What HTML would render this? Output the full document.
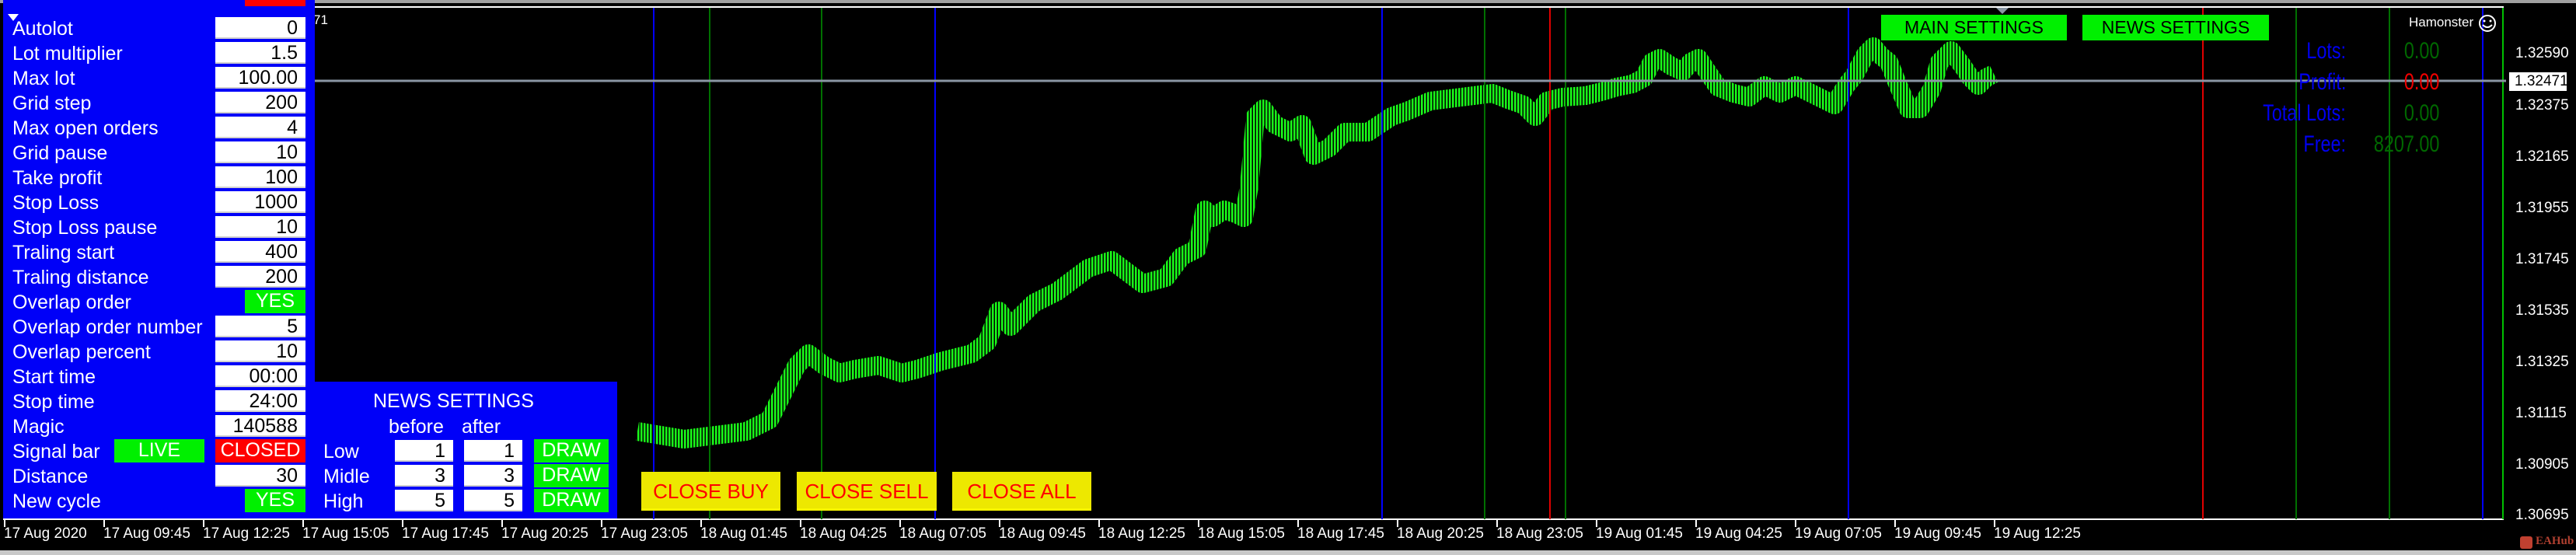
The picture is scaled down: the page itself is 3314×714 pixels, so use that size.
<!DOCTYPE html>
<html><head><meta charset="utf-8">
<style>
*{margin:0;padding:0;box-sizing:border-box}
body{width:3314px;height:714px;background:#000;position:relative;overflow:hidden;font-family:"Liberation Sans",sans-serif}
.a{position:absolute;white-space:nowrap}
.lbl{position:absolute;left:16px;color:#fff;font-size:25px;line-height:32px}
.box{position:absolute;background:#fff;color:#000;font-size:25px;text-align:right;padding-right:10px;line-height:28px;height:28px;border-bottom:2px solid #d0d0d0}
.g{position:absolute;background:#00f000;color:#fff;font-size:25px;text-align:center;line-height:28px;height:30px}
.t{position:absolute;top:676px;color:#fff;font-size:19px}
.p{position:absolute;left:3236px;color:#fff;font-size:19px}
.yb{position:absolute;top:607px;height:50px;background:#ede800;color:#f00;font-size:26px;text-align:center;line-height:50px;border-bottom:3px solid #f8f400}
.s{position:absolute;font-size:30px;transform:scaleX(0.78);transform-origin:right center}
</style></head><body>
<div class="a" style="left:0;top:0;width:3314px;height:4px;background:#a0a0a0"></div>
<div class="a" style="left:0;top:708px;width:3314px;height:6px;background:#c8c8c8"></div>
<div class="a" style="left:4px;top:8px;width:3217px;height:661px;border:2px solid #fff"></div>
<svg class="a" style="left:0;top:0" width="3314" height="714">
<defs>
<pattern id="st" width="4" height="10" patternUnits="userSpaceOnUse"><rect x="0" y="0" width="2.5" height="10" fill="#1aff1a"/></pattern>
<mask id="m"><polyline fill="none" stroke="#fff" stroke-width="24" stroke-linejoin="round" points="820,555 850,560 880,565 920,560 960,555 990,540 1010,500 1025,470 1040,455 1060,470 1080,480 1100,475 1130,470 1160,480 1180,475 1210,465 1250,455 1270,440 1285,400 1300,420 1330,390 1360,375 1400,345 1430,335 1470,365 1500,357 1520,330 1540,320 1550,270 1560,280 1575,270 1590,275 1600,280 1607,240 1615,150 1625,140 1640,160 1660,170 1675,160 1690,200 1710,190 1730,170 1760,170 1790,150 1810,143 1840,130 1880,125 1920,120 1940,128 1960,135 1975,150 1990,130 2010,125 2040,123 2060,118 2080,112 2100,108 2115,100 2125,80 2135,75 2150,85 2165,92 2175,80 2185,75 2195,90 2210,112 2230,120 2250,125 2270,110 2290,120 2310,110 2320,115 2340,125 2360,135 2375,110 2385,98 2400,70 2410,60 2420,72 2430,80 2440,105 2455,140 2470,140 2485,115 2495,80 2510,65 2525,85 2535,100 2545,110 2555,100 2565,95"/></mask>
</defs>
<rect x="800" y="0" width="1800" height="660" fill="url(#st)" mask="url(#m)"/>
<g stroke-width="2">
<line x1="841" y1="10" x2="841" y2="668" stroke="#0000ff"/>
<line x1="913" y1="10" x2="913" y2="668" stroke="#007000"/>
<line x1="1057" y1="10" x2="1057" y2="668" stroke="#007000"/>
<line x1="1203" y1="10" x2="1203" y2="668" stroke="#0000ff"/>
<line x1="1778" y1="10" x2="1778" y2="668" stroke="#0000ff"/>
<line x1="1910" y1="10" x2="1910" y2="668" stroke="#007000"/>
<line x1="1994" y1="10" x2="1994" y2="668" stroke="#e00000"/>
<line x1="2014" y1="10" x2="2014" y2="668" stroke="#007000"/>
<line x1="2378" y1="10" x2="2378" y2="668" stroke="#0000ff"/>
<line x1="2834" y1="10" x2="2834" y2="668" stroke="#e00000"/>
<line x1="2954" y1="10" x2="2954" y2="668" stroke="#007000"/>
<line x1="3074" y1="10" x2="3074" y2="668" stroke="#007000"/>
<line x1="3194" y1="10" x2="3194" y2="668" stroke="#0000ff"/>
<line x1="3220" y1="10" x2="3220" y2="668" stroke="#00c000"/>
</g>
<line x1="400" y1="104" x2="3224" y2="104" stroke="#8a96a4" stroke-width="3"/>
<g stroke="#fff" stroke-width="2">
<line x1="6" y1="669" x2="6" y2="678"/><line x1="134" y1="669" x2="134" y2="678"/><line x1="262" y1="669" x2="262" y2="678"/><line x1="390" y1="669" x2="390" y2="678"/><line x1="518" y1="669" x2="518" y2="678"/><line x1="646" y1="669" x2="646" y2="678"/><line x1="774" y1="669" x2="774" y2="678"/><line x1="902" y1="669" x2="902" y2="678"/><line x1="1030" y1="669" x2="1030" y2="678"/><line x1="1158" y1="669" x2="1158" y2="678"/><line x1="1286" y1="669" x2="1286" y2="678"/><line x1="1414" y1="669" x2="1414" y2="678"/><line x1="1542" y1="669" x2="1542" y2="678"/><line x1="1670" y1="669" x2="1670" y2="678"/><line x1="1798" y1="669" x2="1798" y2="678"/><line x1="1926" y1="669" x2="1926" y2="678"/><line x1="2054" y1="669" x2="2054" y2="678"/><line x1="2182" y1="669" x2="2182" y2="678"/><line x1="2310" y1="669" x2="2310" y2="678"/><line x1="2438" y1="669" x2="2438" y2="678"/><line x1="2566" y1="669" x2="2566" y2="678"/>
</g>
<polygon points="2568,10 2584,10 2576,18" fill="#8a96a4"/>
<circle cx="3200" cy="30" r="10" fill="none" stroke="#fff" stroke-width="2"/>
<circle cx="3196" cy="27" r="1.5" fill="#fff"/><circle cx="3204" cy="27" r="1.5" fill="#fff"/>
<path d="M3194 32 Q3200 38 3206 32" fill="none" stroke="#fff" stroke-width="2"/>
</svg>
<div class="t" style="left:5px">17 Aug 2020</div><div class="t" style="left:133px">17 Aug 09:45</div><div class="t" style="left:261px">17 Aug 12:25</div><div class="t" style="left:389px">17 Aug 15:05</div><div class="t" style="left:517px">17 Aug 17:45</div><div class="t" style="left:645px">17 Aug 20:25</div><div class="t" style="left:773px">17 Aug 23:05</div><div class="t" style="left:901px">18 Aug 01:45</div><div class="t" style="left:1029px">18 Aug 04:25</div><div class="t" style="left:1157px">18 Aug 07:05</div><div class="t" style="left:1285px">18 Aug 09:45</div><div class="t" style="left:1413px">18 Aug 12:25</div><div class="t" style="left:1541px">18 Aug 15:05</div><div class="t" style="left:1669px">18 Aug 17:45</div><div class="t" style="left:1797px">18 Aug 20:25</div><div class="t" style="left:1925px">18 Aug 23:05</div><div class="t" style="left:2053px">19 Aug 01:45</div><div class="t" style="left:2181px">19 Aug 04:25</div><div class="t" style="left:2309px">19 Aug 07:05</div><div class="t" style="left:2437px">19 Aug 09:45</div><div class="t" style="left:2565px">19 Aug 12:25</div>
<div class="p" style="top:58px">1.32590</div>
<div class="a" style="left:3228px;top:93px;width:74px;height:24px;background:#fff;color:#000;font-size:19px;padding-left:7px;line-height:24px">1.32471</div>
<div class="p" style="top:125px">1.32375</div><div class="p" style="top:191px">1.32165</div><div class="p" style="top:257px">1.31955</div><div class="p" style="top:323px">1.31745</div><div class="p" style="top:389px">1.31535</div><div class="p" style="top:455px">1.31325</div><div class="p" style="top:521px">1.31115</div><div class="p" style="top:587px">1.30905</div><div class="p" style="top:652px">1.30695</div>
<div class="a" style="left:3242px;top:690px;width:16px;height:16px;border-radius:3px;background:#c04030"></div>
<div class="a" style="left:3262px;top:688px;color:#b04030;font-size:15px;font-family:'Liberation Serif',serif;font-weight:bold">EAHub</div>
<div class="a" style="left:403px;top:16px;color:#fff;font-size:17px">71</div>
<div class="a" style="left:4px;top:0;width:401px;height:667px;background:#0000f8"></div>
<div class="a" style="left:405px;top:491px;width:389px;height:176px;background:#0000f8"></div>
<div class="a" style="left:315px;top:0;width:78px;height:8px;background:#f00"></div>
<div class="lbl" style="top:-25px">Autolot</div>
<svg class="a" style="left:10px;top:18px" width="14" height="10"><polygon points="0,0 14,0 7,9" fill="#fff"/></svg>
<div class="lbl" style="top:21px">Autolot</div><div class="box" style="left:277px;top:22px;width:116px">0</div>
<div class="lbl" style="top:53px">Lot multiplier</div><div class="box" style="left:277px;top:54px;width:116px">1.5</div>
<div class="lbl" style="top:85px">Max lot</div><div class="box" style="left:277px;top:86px;width:116px">100.00</div>
<div class="lbl" style="top:117px">Grid step</div><div class="box" style="left:277px;top:118px;width:116px">200</div>
<div class="lbl" style="top:149px">Max open orders</div><div class="box" style="left:277px;top:150px;width:116px">4</div>
<div class="lbl" style="top:181px">Grid pause</div><div class="box" style="left:277px;top:182px;width:116px">10</div>
<div class="lbl" style="top:213px">Take profit</div><div class="box" style="left:277px;top:214px;width:116px">100</div>
<div class="lbl" style="top:245px">Stop Loss</div><div class="box" style="left:277px;top:246px;width:116px">1000</div>
<div class="lbl" style="top:277px">Stop Loss pause</div><div class="box" style="left:277px;top:278px;width:116px">10</div>
<div class="lbl" style="top:309px">Traling start</div><div class="box" style="left:277px;top:310px;width:116px">400</div>
<div class="lbl" style="top:341px">Traling distance</div><div class="box" style="left:277px;top:342px;width:116px">200</div>
<div class="lbl" style="top:373px">Overlap order</div><div class="g" style="left:315px;top:373px;width:78px">YES</div>
<div class="lbl" style="top:405px">Overlap order number</div><div class="box" style="left:277px;top:406px;width:116px">5</div>
<div class="lbl" style="top:437px">Overlap percent</div><div class="box" style="left:277px;top:438px;width:116px">10</div>
<div class="lbl" style="top:469px">Start time</div><div class="box" style="left:277px;top:470px;width:116px">00:00</div>
<div class="lbl" style="top:501px">Stop time</div><div class="box" style="left:277px;top:502px;width:116px">24:00</div>
<div class="lbl" style="top:533px">Magic</div><div class="box" style="left:277px;top:534px;width:116px">140588</div>
<div class="lbl" style="top:565px">Signal bar</div><div class="g" style="left:147px;top:565px;width:116px">LIVE</div><div class="g" style="left:277px;top:565px;width:116px;background:#f00">CLOSED</div>
<div class="lbl" style="top:597px">Distance</div><div class="box" style="left:277px;top:598px;width:116px">30</div>
<div class="lbl" style="top:629px">New cycle</div><div class="g" style="left:315px;top:629px;width:78px">YES</div>
<div class="a" style="left:480px;top:502px;color:#fff;font-size:25px">NEWS SETTINGS</div>
<div class="a" style="left:500px;top:535px;color:#fff;font-size:25px">before</div>
<div class="a" style="left:594px;top:535px;color:#fff;font-size:25px">after</div>
<div class="lbl" style="left:416px;top:565px">Low</div><div class="lbl" style="left:416px;top:597px">Midle</div><div class="lbl" style="left:416px;top:629px">High</div>
<div class="box" style="left:508px;top:566px;width:75px">1</div><div class="box" style="left:597px;top:566px;width:75px">1</div><div class="g" style="left:687px;top:565px;width:96px">DRAW</div>
<div class="box" style="left:508px;top:598px;width:75px">3</div><div class="box" style="left:597px;top:598px;width:75px">3</div><div class="g" style="left:687px;top:597px;width:96px">DRAW</div>
<div class="box" style="left:508px;top:630px;width:75px">5</div><div class="box" style="left:597px;top:630px;width:75px">5</div><div class="g" style="left:687px;top:629px;width:96px">DRAW</div>
<div class="yb" style="left:825px;width:179px">CLOSE BUY</div>
<div class="yb" style="left:1025px;width:180px">CLOSE SELL</div>
<div class="yb" style="left:1225px;width:179px">CLOSE ALL</div>
<div class="a" style="left:2420px;top:19px;width:239px;height:33px;background:#00f000;color:#000;font-size:23px;text-align:center;line-height:33px">MAIN SETTINGS</div>
<div class="a" style="left:2679px;top:19px;width:240px;height:33px;background:#00f000;color:#000;font-size:23px;text-align:center;line-height:33px">NEWS SETTINGS</div>
<div class="a" style="left:3099px;top:19px;color:#fff;font-size:17px">Hamonster</div>
<div class="s" style="right:296px;top:49px;color:#0000f0">Lots:</div>
<div class="s" style="right:176px;top:49px;color:#006800">0.00</div>
<div class="s" style="right:296px;top:89px;color:#0000f0">Profit:</div>
<div class="s" style="right:176px;top:89px;color:#f00000">0.00</div>
<div class="s" style="right:296px;top:129px;color:#0000f0">Total Lots:</div>
<div class="s" style="right:176px;top:129px;color:#006800">0.00</div>
<div class="s" style="right:296px;top:169px;color:#0000f0">Free:</div>
<div class="s" style="right:176px;top:169px;color:#006800">8207.00</div>
</body></html>
